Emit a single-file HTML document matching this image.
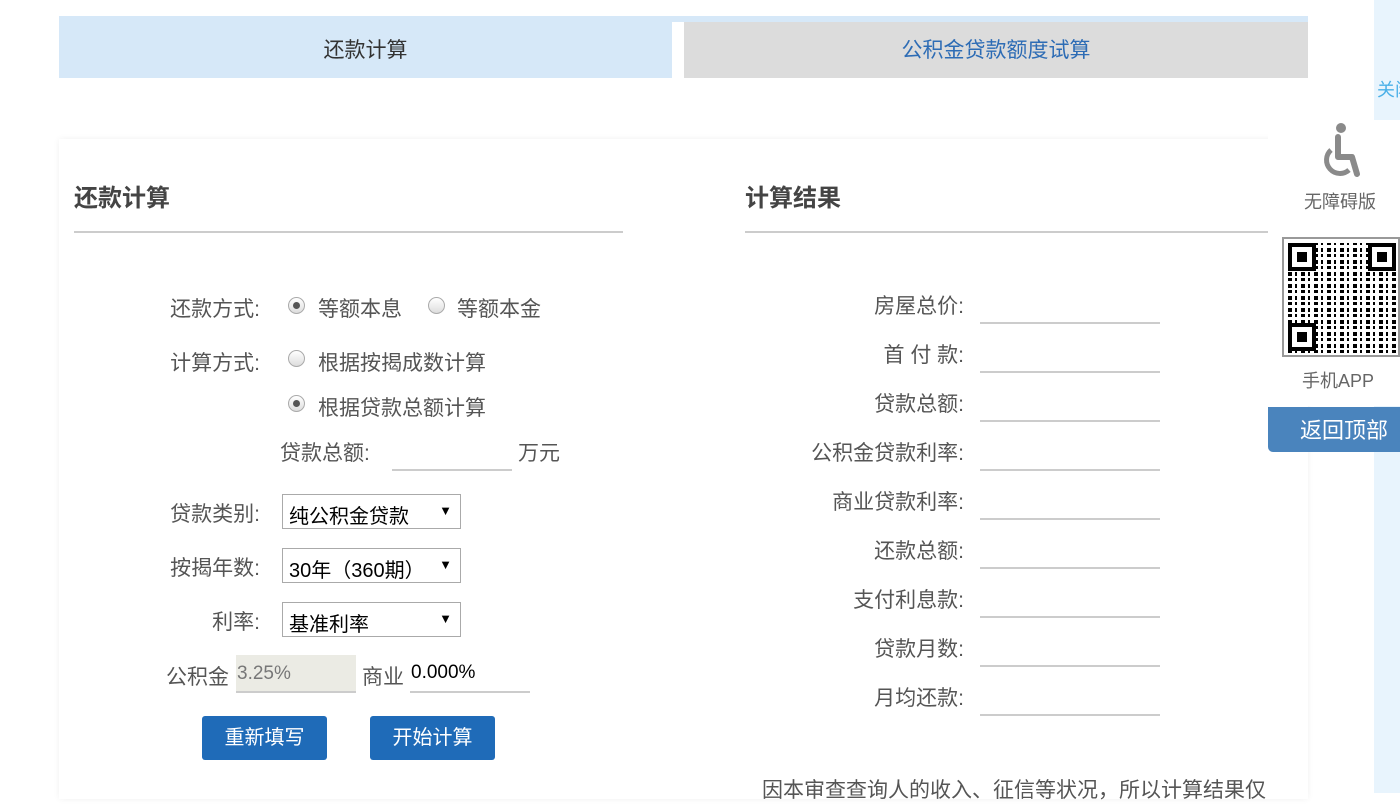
<!DOCTYPE html>
<html><head><meta charset="utf-8"><style>
body{margin:0;width:1400px;height:793px;overflow:hidden;background:#fff;font-family:"Liberation Sans","Noto Sans CJK SC",sans-serif;color:#555;position:relative}
.a{position:absolute}
.lbl{position:absolute;font-size:21px;color:#555;text-align:right;white-space:nowrap}
.radio{position:absolute;width:15px;height:15px;border-radius:50%;border:1px solid #aaa;background:linear-gradient(#fff,#ddd)}
.radio.on::after{content:"";position:absolute;left:4px;top:4px;width:7px;height:7px;border-radius:50%;background:#555}
.line{position:absolute;height:2px;background:#ccc}
.sel{position:absolute;width:179px;height:35px;border:1px solid #aaa;background:#fff;font-size:20px;color:#000;box-sizing:border-box;padding:5px 6px}
.sel::after{content:"▼";position:absolute;right:8px;top:8px;font-size:13px}
.btn{position:absolute;background:#1f6bb8;color:#fff;font-size:20px;border-radius:3px;text-align:center;line-height:44px;height:44px}
</style></head><body>
<div class="a" style="left:59px;top:16px;width:1249px;height:6px;background:#d6e8f8"></div>
<div class="a" style="left:59px;top:16px;width:613px;height:62px;background:#d6e8f8;text-align:center;line-height:70px;font-size:21px;color:#333">还款计算</div>
<div class="a" style="left:684px;top:22px;width:624px;height:56px;background:#dcdcdc;text-align:center;line-height:58px;font-size:21px;color:#2d6cb5">公积金贷款额度试算</div>
<div class="a" style="left:1374px;top:0;width:26px;height:793px;background:#e8f4fd"></div>
<div class="a" style="left:1377px;top:76px;font-size:18px;color:#4ab0e8;white-space:nowrap;overflow:hidden;width:23px">关闭</div>
<div class="a" style="left:59px;top:139px;width:1249px;height:660px;background:#fff;box-shadow:0 0 6px rgba(0,0,0,.06)"></div>
<div class="a" style="left:74px;top:178px;font-size:24px;font-weight:bold;color:#444">还款计算</div>
<div class="line" style="left:74px;top:231px;width:549px"></div>
<div class="a" style="left:745px;top:178px;font-size:24px;font-weight:bold;color:#444">计算结果</div>
<div class="line" style="left:745px;top:231px;width:523px"></div>

<div class="lbl" style="left:150px;top:293px;width:110px">还款方式:</div>
<div class="radio on" style="left:288px;top:297px"></div><div class="lbl" style="left:318px;top:293px">等额本息</div>
<div class="radio" style="left:428px;top:297px"></div><div class="lbl" style="left:457px;top:293px">等额本金</div>
<div class="lbl" style="left:150px;top:347px;width:110px">计算方式:</div>
<div class="radio" style="left:288px;top:350px"></div><div class="lbl" style="left:318px;top:347px">根据按揭成数计算</div>
<div class="radio on" style="left:288px;top:395px"></div><div class="lbl" style="left:318px;top:392px">根据贷款总额计算</div>
<div class="lbl" style="left:280px;top:437px">贷款总额:</div>
<div class="line" style="left:392px;top:469px;width:120px"></div>
<div class="lbl" style="left:518px;top:437px">万元</div>
<div class="lbl" style="left:150px;top:498px;width:110px">贷款类别:</div><div class="sel" style="left:282px;top:494px">纯公积金贷款</div>
<div class="lbl" style="left:150px;top:552px;width:110px">按揭年数:</div><div class="sel" style="left:282px;top:548px">30年（360期）</div>
<div class="lbl" style="left:150px;top:606px;width:110px">利率:</div><div class="sel" style="left:282px;top:602px">基准利率</div>
<div class="lbl" style="left:166px;top:661px">公积金</div>
<div class="a" style="left:236px;top:655px;width:120px;height:38px;background:#ebebe4;border-bottom:2px solid #ccc;box-sizing:border-box;font-size:19px;color:#777;padding:8px 1px">3.25%</div>
<div class="lbl" style="left:362px;top:661px">商业</div>
<div class="a" style="left:411px;top:662px;font-size:19px;color:#000">0.000%</div>
<div class="line" style="left:410px;top:691px;width:120px"></div>
<div class="btn" style="left:202px;top:716px;width:125px">重新填写</div>
<div class="btn" style="left:370px;top:716px;width:125px">开始计算</div>

<div class="lbl" style="left:760px;top:290px;width:204px">房屋总价:</div><div class="line" style="left:980px;top:322px;width:180px"></div>
<div class="lbl" style="left:760px;top:339px;width:204px">首 付 款:</div><div class="line" style="left:980px;top:371px;width:180px"></div>
<div class="lbl" style="left:760px;top:388px;width:204px">贷款总额:</div><div class="line" style="left:980px;top:420px;width:180px"></div>
<div class="lbl" style="left:760px;top:437px;width:204px">公积金贷款利率:</div><div class="line" style="left:980px;top:469px;width:180px"></div>
<div class="lbl" style="left:760px;top:486px;width:204px">商业贷款利率:</div><div class="line" style="left:980px;top:518px;width:180px"></div>
<div class="lbl" style="left:760px;top:535px;width:204px">还款总额:</div><div class="line" style="left:980px;top:567px;width:180px"></div>
<div class="lbl" style="left:760px;top:584px;width:204px">支付利息款:</div><div class="line" style="left:980px;top:616px;width:180px"></div>
<div class="lbl" style="left:760px;top:633px;width:204px">贷款月数:</div><div class="line" style="left:980px;top:665px;width:180px"></div>
<div class="lbl" style="left:760px;top:682px;width:204px">月均还款:</div><div class="line" style="left:980px;top:714px;width:180px"></div>
<div class="lbl" style="left:762px;top:774px;text-align:left">因本审查查询人的收入、征信等状况，所以计算结果仅</div>

<div class="a" style="left:1268px;top:120px;width:132px;height:286px;background:#fff"></div>
<svg class="a" style="left:1316px;top:120px" width="50" height="60" viewBox="0 0 50 60"><circle cx="25" cy="8" r="5" fill="#8a8a8a"/><path d="M22 17v20h14l5 17" stroke="#8a8a8a" stroke-width="6" fill="none" stroke-linecap="round" stroke-linejoin="round"/><path d="M15 30a13 13 0 1 0 18 20" stroke="#8a8a8a" stroke-width="5" fill="none"/></svg>
<div class="a" style="left:1304px;top:188px;font-size:18px;color:#666">无障碍版</div>
<div class="a" style="left:1282px;top:237px;width:118px;height:120px;border:2px solid #999;box-sizing:border-box;background:#fff;overflow:hidden">
<div class="a" style="left:4px;top:4px;width:110px;height:110px;background:repeating-linear-gradient(90deg,#000 0 4px,#fff 4px 7px,#000 7px 9px,#fff 9px 13px),#fff;-webkit-mask:repeating-linear-gradient(0deg,#000 0 3px,transparent 3px 5px,#000 5px 9px,transparent 9px 12px)"></div>
<div class="a" style="left:4px;top:4px;width:28px;height:28px;border:4px solid #000;background:#fff;box-sizing:border-box"><div class="a" style="left:5px;top:5px;width:10px;height:10px;background:#000"></div></div>
<div class="a" style="left:4px;top:84px;width:28px;height:28px;border:4px solid #000;background:#fff;box-sizing:border-box"><div class="a" style="left:5px;top:5px;width:10px;height:10px;background:#000"></div></div>
<div class="a" style="left:84px;top:4px;width:28px;height:28px;border:4px solid #000;background:#fff;box-sizing:border-box"><div class="a" style="left:5px;top:5px;width:10px;height:10px;background:#000"></div></div></div>
<div class="a" style="left:1302px;top:367px;font-size:18px;color:#666">手机APP</div>
<div class="a" style="left:1268px;top:407px;width:132px;height:45px;background:#4a84bd;border-radius:0 0 0 5px;color:#fff;font-size:22px;line-height:48px;padding-left:32px;box-sizing:border-box">返回顶部</div>
</body></html>
